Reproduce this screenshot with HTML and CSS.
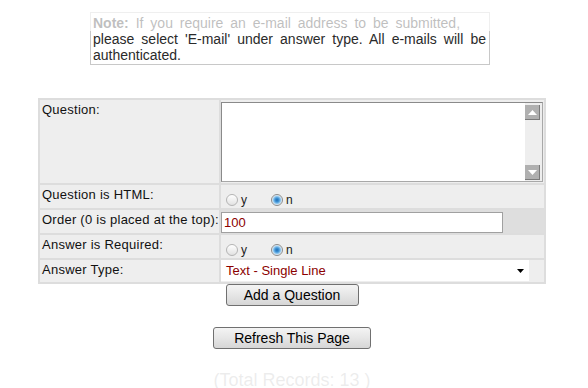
FILE: index.html
```html
<!DOCTYPE html>
<html lang="en">
<head>
    <meta charset="UTF-8">
    <meta name="viewport" content="width=device-width, initial-scale=1.0">
    <title>Survey Questions</title>
    <link rel="stylesheet" href="styles.css">
</head>
<body>
    <div class="fade-top"></div>
    <div class="page">
        <div class="note">
            <span class="lead"><b>Note:</b> If you require an e-mail address to be submitted,</span><br>
            please select 'E-mail' under answer type. All e-mails will be authenticated.
        </div>
        <form class="question-form">
            <table class="form-table">
                <tr class="row-tall">
                    <td class="label">Question:</td>
                    <td class="field">
                        <div class="textbox">
                            <textarea name="question"></textarea>
                            <div class="vscroll">
                                <span class="arrow">
                                    <svg width="9" height="5" viewBox="0 0 9 5"><path d="M0 5 L4.5 0 L9 5 Z" fill="#fff"/></svg>
                                </span>
                                <span class="arrow">
                                    <svg width="9" height="5" viewBox="0 0 9 5"><path d="M0 0 L4.5 5 L9 0 Z" fill="#fff"/></svg>
                                </span>
                            </div>
                        </div>
                    </td>
                </tr>
                <tr class="row">
                    <td class="label">Question is HTML:</td>
                    <td class="field">
                        <div class="radios">
                            <label class="choice"><input type="radio" name="html" value="y"> y</label>
                            <label class="choice"><input type="radio" name="html" value="n" checked> n</label>
                        </div>
                    </td>
                </tr>
                <tr class="row">
                    <td class="label">Order (0 is placed at the top):</td>
                    <td class="field field-dark">
                        <input class="text-input" type="text" name="order" value="100">
                    </td>
                </tr>
                <tr class="row">
                    <td class="label">Answer is Required:</td>
                    <td class="field">
                        <div class="radios">
                            <label class="choice"><input type="radio" name="required" value="y"> y</label>
                            <label class="choice"><input type="radio" name="required" value="n" checked> n</label>
                        </div>
                    </td>
                </tr>
                <tr class="row row-last">
                    <td class="label">Answer Type:</td>
                    <td class="field">
                        <div class="select">
                            <span>Text - Single Line</span>
                            <svg width="7" height="4" viewBox="0 0 7 4"><path d="M0 0 L7 0 L3.5 4 Z" fill="#000"/></svg>
                        </div>
                    </td>
                </tr>
            </table>
            <div class="actions">
                <button type="button" class="btn btn-add">Add a Question</button>
            </div>
            <div class="actions actions-refresh">
                <button type="button" class="btn btn-refresh">Refresh This Page</button>
            </div>
            <div class="total">(Total Records: 13 )</div>
        </form>
    </div>
    <div class="fade-bottom"></div>
</body>
</html>
```

FILE: styles.css
```css
body {
    margin: 0;
    font-family: "Liberation Sans", Arial, sans-serif;
    background-color: #ffffff;
    color: #111;
    overflow: hidden;
}
.page {
    width: 508px;
    margin-left: 38px;
    padding-top: 12px;
}
.note {
    box-sizing: border-box;
    width: 400px;
    margin-left: 52px;
    border: 1px solid #c8c8c8;
    padding: 2px 3px 1px 2px;
    font-size: 14px;
    line-height: 16px;
    text-align: justify;
    color: #2a2a2a;
}
.note .lead {
    word-spacing: 3px;
}
.form-table {
    margin-top: 33px;
    width: 508px;
    border-spacing: 2px;
    background-color: #dddddd;
    font-size: 13px;
}
.form-table td {
    background-color: #eeeeee;
    padding: 0;
    vertical-align: top;
}
.form-table .label {
    width: 177px;
    padding: 2px 0 0 2px;
    line-height: 15px;
    letter-spacing: 0.25px;
}
.form-table .field-dark {
    background-color: #dedede;
}
.row {
    height: 23px;
}
.row-last {
    height: 22px;
}
.textbox {
    display: flex;
    box-sizing: border-box;
    width: 322px;
    height: 80px;
    margin: 2px 0 1px 0;
    border: 1px solid #a8a8a8;
    border-top-color: #8a8a8a;
    border-left-color: #8a8a8a;
    background-color: #ffffff;
}
.textbox textarea {
    flex: 1;
    border: none;
    resize: none;
    outline: none;
    padding: 0;
    font-family: inherit;
}
.vscroll {
    display: flex;
    flex-direction: column;
    justify-content: space-between;
    width: 16px;
    padding: 2px 1px 1px 0;
    background-color: #eeeeee;
}
.arrow {
    display: flex;
    align-items: center;
    justify-content: center;
    width: 14px;
    height: 14px;
    background-color: #b0b0b0;
    border-right: 1px solid #7a7a7a;
    border-bottom: 1px solid #7a7a7a;
}
.radios {
    display: flex;
    align-items: center;
    padding: 8px 0 0 5px;
}
.choice {
    display: flex;
    align-items: center;
    gap: 3px;
    width: 45px;
    font-size: 12px;
    color: #222;
}
.choice input {
    appearance: none;
    -webkit-appearance: none;
    width: 12px;
    height: 12px;
    margin: 0;
    border: 1px solid #b4b4b4;
    border-radius: 50%;
    background: linear-gradient(#ffffff, #e2e2e2);
}
.choice input:checked {
    border-color: #8c8c8c;
    background: radial-gradient(circle, #1f6db3 0, #3f93d6 2px, #8cc4ec 3.5px, #eef3f7 5px);
}
.text-input {
    box-sizing: border-box;
    width: 282px;
    height: 21px;
    margin: 2px 0 0 0;
    border: 1px solid #a0a0a0;
    padding: 0 2px;
    font-family: inherit;
    font-size: 13px;
    color: #8b0000;
    background-color: #ffffff;
}
.select {
    display: flex;
    align-items: center;
    justify-content: space-between;
    box-sizing: border-box;
    width: 308px;
    height: 21px;
    padding: 0 5px 0 5px;
    background-color: #ffffff;
    color: #8b0000;
}
.actions {
    text-align: center;
}
.actions-refresh {
    margin-top: 21px;
}
.btn {
    height: 22px;
    padding: 0;
    border: 1px solid #707070;
    border-radius: 3px;
    background: linear-gradient(#f4f4f4, #e6e6e6 50%, #d6d6d6);
    font-family: inherit;
    font-size: 14px;
    color: #000;
}
.btn-add {
    width: 133px;
}
.btn-refresh {
    width: 158px;
}
.total {
    margin-top: 21px;
    text-align: center;
    font-size: 18px;
    color: #444;
}
.fade-top {
    position: fixed;
    top: 0;
    left: 0;
    right: 0;
    height: 31px;
    background-color: rgba(255,255,255,0.7);
    z-index: 2;
}
.fade-bottom {
    position: fixed;
    bottom: 0;
    left: 0;
    right: 0;
    height: 30px;
    background-color: rgba(255,255,255,0.9);
    z-index: 2;
}
```
